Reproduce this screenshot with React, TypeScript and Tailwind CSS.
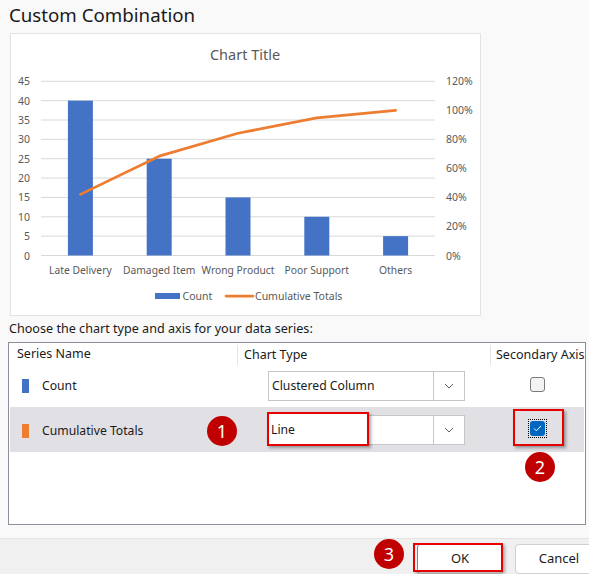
import React from "react";

const cats = [
  { name: "Late Delivery", v: 40, p: 40 / 95 },
  { name: "Damaged Item", v: 25, p: 65 / 95 },
  { name: "Wrong Product", v: 15, p: 80 / 95 },
  { name: "Poor Support", v: 10, p: 90 / 95 },
  { name: "Others", v: 5, p: 1 },
];

const plotLeft = 41;
const plotRight = 435;
const base = 255.5;
const span = 174.2;
const catW = (plotRight - plotLeft) / cats.length;
const yv = (v: number) => base - (v / 45) * span;
const yp = (p: number) => base - (p / 1.2) * span;
const cx = (i: number) => plotLeft + catW * i + catW / 2;

const svgFont = '"Noto Sans", "Open Sans", sans-serif';

const Chart: React.FC = () => {
  const linePts = cats.map((c, i) => `${cx(i)},${yp(c.p)}`).join(" ");
  return (
    <svg className="block h-full w-full" viewBox="11 34 469 281" fontFamily={svgFont}>
      <text x={245} y={54} fontSize={14.5} fill="#595959" textAnchor="middle" dominantBaseline="central">
        Chart Title
      </text>
      {Array.from({ length: 10 }).map((_, i) => {
        const y = base - (i * span) / 9;
        return (
          <g key={i}>
            <line x1={plotLeft} x2={plotRight} y1={y} y2={y} stroke="#d9d9d9" strokeWidth={1} />
            <text x={30} y={y} fontSize={10.5} fill="#595959" textAnchor="end" dominantBaseline="central">
              {i * 5}
            </text>
          </g>
        );
      })}
      {Array.from({ length: 7 }).map((_, i) => (
        <text
          key={i}
          x={446}
          y={base - (i * span) / 6}
          fontSize={10.5}
          fill="#595959"
          dominantBaseline="central"
        >
          {i * 20}%
        </text>
      ))}
      {cats.map((c, i) => (
        <g key={c.name}>
          <rect x={cx(i) - 12.5} y={yv(c.v)} width={25} height={base - yv(c.v)} fill="#4472c4" />
          <text x={cx(i)} y={270} fontSize={10.3} fill="#595959" textAnchor="middle" dominantBaseline="central">
            {c.name}
          </text>
        </g>
      ))}
      <polyline points={linePts} fill="none" stroke="#ed7d31" strokeWidth={2.75} strokeLinejoin="round" strokeLinecap="round" />
      <rect x={155} y={293} width={25} height={6} fill="#4472c4" />
      <text x={182.5} y={296} fontSize={10.5} fill="#595959" dominantBaseline="central">
        Count
      </text>
      <line x1={226} x2={253} y1={296} y2={296} stroke="#ed7d31" strokeWidth={2.75} strokeLinecap="round" />
      <text x={255} y={296} fontSize={10.5} fill="#595959" dominantBaseline="central">
        Cumulative Totals
      </text>
    </svg>
  );
};

const Chevron: React.FC = () => (
  <svg width="10" height="6" viewBox="0 0 10 6" fill="none">
    <path d="M1 1l4 4 4-4" stroke="#606060" strokeWidth="1" />
  </svg>
);

const Combo: React.FC<{ value: string }> = ({ value }) => (
  <div className="ml-[31px] flex h-[30px] w-[197px] border border-[#c6c6c6] bg-white">
    <div className="flex-1 pl-[3px] text-[12.2px] leading-[28px] text-[#1a1a1a]">{value}</div>
    <div className="flex w-[31px] items-center justify-center border-l border-[#c6c6c6] bg-white">
      <Chevron />
    </div>
  </div>
);

const Badge: React.FC<{ n: number; className: string }> = ({ n, className }) => (
  <div
    className={`absolute flex h-[30px] w-[30px] items-center justify-center rounded-full bg-[#c00000] text-[18px] leading-none text-white ${className}`}
  >
    {n}
  </div>
);

export default function App() {
  return (
    <div className="relative flex h-[574px] w-[589px] flex-col overflow-hidden bg-[#f9f9f9] font-['Noto_Sans','Open_Sans',sans-serif] text-[#1a1a1a]">
      <div className="h-[33px] pl-[9px] text-[18.7px] leading-[30px] text-[#1a1a1a]">Custom Combination</div>

      <div className="ml-[10px] h-[283px] w-[471px] border border-[#e3e3e3] bg-white">
        <Chart />
      </div>

      <div className="mt-[5px] h-[16px] pl-[9px] text-[12.6px] leading-[16px]">
        Choose the chart type and axis for your data series:
      </div>

      <div className="mx-[8px] mt-[5px] h-[183px] w-[578px] border border-[#8a8f99] bg-white">
        <div className="grid h-[22px] grid-cols-[228px_253px_1fr] text-[12.5px]">
          <div className="pl-[8px] leading-[22px]">Series Name</div>
          <div className="mt-[2px] h-[20px] border-l border-[#e5e5e5] pl-[6px] leading-[20px]">Chart Type</div>
          <div className="mt-[2px] h-[20px] overflow-hidden whitespace-nowrap border-l border-[#e5e5e5] pl-[5px] leading-[20px]">
            Secondary Axis
          </div>
        </div>

        <div className="grid h-[42px] grid-cols-[228px_253px_1fr] items-center text-[12.2px]">
          <div className="flex items-center pl-[13px]">
            <div className="h-[14px] w-[7px] bg-[#4472c4]" />
            <div className="pl-[13px]">Count</div>
          </div>
          <Combo value="Clustered Column" />
          <div className="flex justify-center pb-[4px]">
            <div className="h-[15px] w-[15px] rounded-[3px] border border-[#7a7a7a] bg-[#f3f3f3]" />
          </div>
        </div>

        <div className="mx-[1px] grid h-[45px] grid-cols-[227px_253px_1fr] items-center bg-[#e1e0e5] text-[12.2px]">
          <div className="flex items-center pl-[12px] pt-[3px]">
            <div className="h-[14px] w-[7px] bg-[#ed7d31]" />
            <div className="pl-[13px]">Cumulative Totals</div>
          </div>
          <Combo value="Line" />
          <div className="flex justify-center pb-[2px]">
            <div className="flex h-[19px] w-[19px] items-center justify-center border border-dotted border-black">
              <div className="flex h-[15px] w-[15px] items-center justify-center rounded-[3px] bg-[#0067c0]">
                <svg width="9" height="7" viewBox="0 0 9 7" fill="none">
                  <path d="M1 3.5l2.3 2.3L8 1" stroke="white" strokeWidth="1" />
                </svg>
              </div>
            </div>
          </div>
        </div>
      </div>

      <div className="mt-[13px] flex flex-1 items-start justify-end gap-[12px] border-t border-[#e3e3e3] bg-[#f0f0f0] pt-[5px]">
        <div className="flex h-[30px] w-[86px] items-center justify-center rounded-[4px] border border-[#cfcfcf] border-l-[#5a8fd0] bg-white text-[13px]">
          OK
        </div>
        <div className="mr-[-14px] flex h-[30px] w-[88px] items-center justify-center rounded-[4px] border border-[#d0d0d0] bg-white text-[13px]">
          Cancel
        </div>
      </div>

      {/* annotation overlays */}
      <div className="absolute left-[267px] top-[412px] h-[34px] w-[102px] border-2 border-[#e60000] shadow-[2px_2px_3px_rgba(0,0,0,0.35)]" />
      <div className="absolute left-[269px] top-[414px] h-[30px] w-[98px] bg-white pl-[2px] pt-[2px] text-[12.2px] leading-[28px]">Line</div>
      <div className="absolute left-[513px] top-[409px] h-[37px] w-[51px] border-2 border-[#e60000] shadow-[2px_2px_3px_rgba(0,0,0,0.35)]" />
      <div className="absolute left-[413px] top-[543px] h-[29px] w-[90px] border-2 border-[#e60000] shadow-[2px_2px_3px_rgba(0,0,0,0.3)]" />
      <Badge n={1} className="left-[207px] top-[416px]" />
      <Badge n={2} className="left-[525px] top-[452px]" />
      <Badge n={3} className="left-[374px] top-[539px]" />
    </div>
  );
}
